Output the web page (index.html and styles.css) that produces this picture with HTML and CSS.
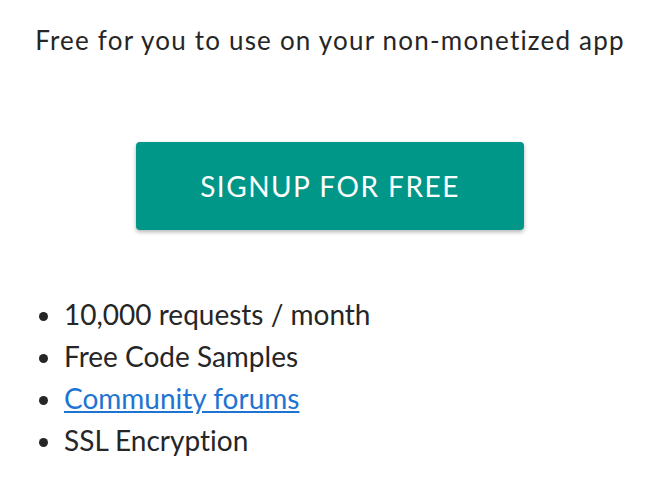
FILE: index.html
```html
<!DOCTYPE html>
<html>
<head>
<meta charset="utf-8">
<link rel="stylesheet" href="styles.css">
</head>
<body>
<div class="plan">
  <p class="lead">Free for you to use on your non-monetized app</p>
  <div class="cta-wrap">
    <a class="cta" href="#">SIGNUP FOR FREE</a>
  </div>
  <ul class="features">
    <li>10,000 requests / month</li>
    <li>Free Code Samples</li>
    <li><a class="link" href="#">Community forums</a></li>
    <li>SSL Encryption</li>
  </ul>
</div>
</body>
</html>
```
FILE: styles.css
```css
html, body {
  margin: 0;
  padding: 0;
  background: #ffffff;
}
body {
  font-family: Lato, "Noto Sans", sans-serif;
  font-variant-ligatures: none;
  color: #262626;
  width: 654px;
  height: 480px;
  overflow: hidden;
}
.plan {
  display: flex;
  flex-direction: column;
  padding-left: 6px;
}
.lead {
  margin: 24px 0 0 0;
  text-align: center;
  font-size: 26px;
  letter-spacing: 1.2px;
  line-height: 32px;
  color: #262626;
}
.cta-wrap {
  display: flex;
  justify-content: center;
  margin-top: 86px;
}
.cta {
  display: flex;
  align-items: center;
  justify-content: center;
  width: 388px;
  height: 88px;
  background: #009688;
  color: #ffffff;
  text-decoration: none;
  font-size: 28px;
  letter-spacing: 1.5px;
  border-radius: 4px;
  box-shadow: 0 2px 4px rgba(0,0,0,0.3);
}
.features {
  margin: 63px 0 0 0;
  padding-left: 58px;
  font-size: 28px;
  line-height: 42px;
}
.link {
  color: #1e74d2;
  text-decoration: underline;
}
```
